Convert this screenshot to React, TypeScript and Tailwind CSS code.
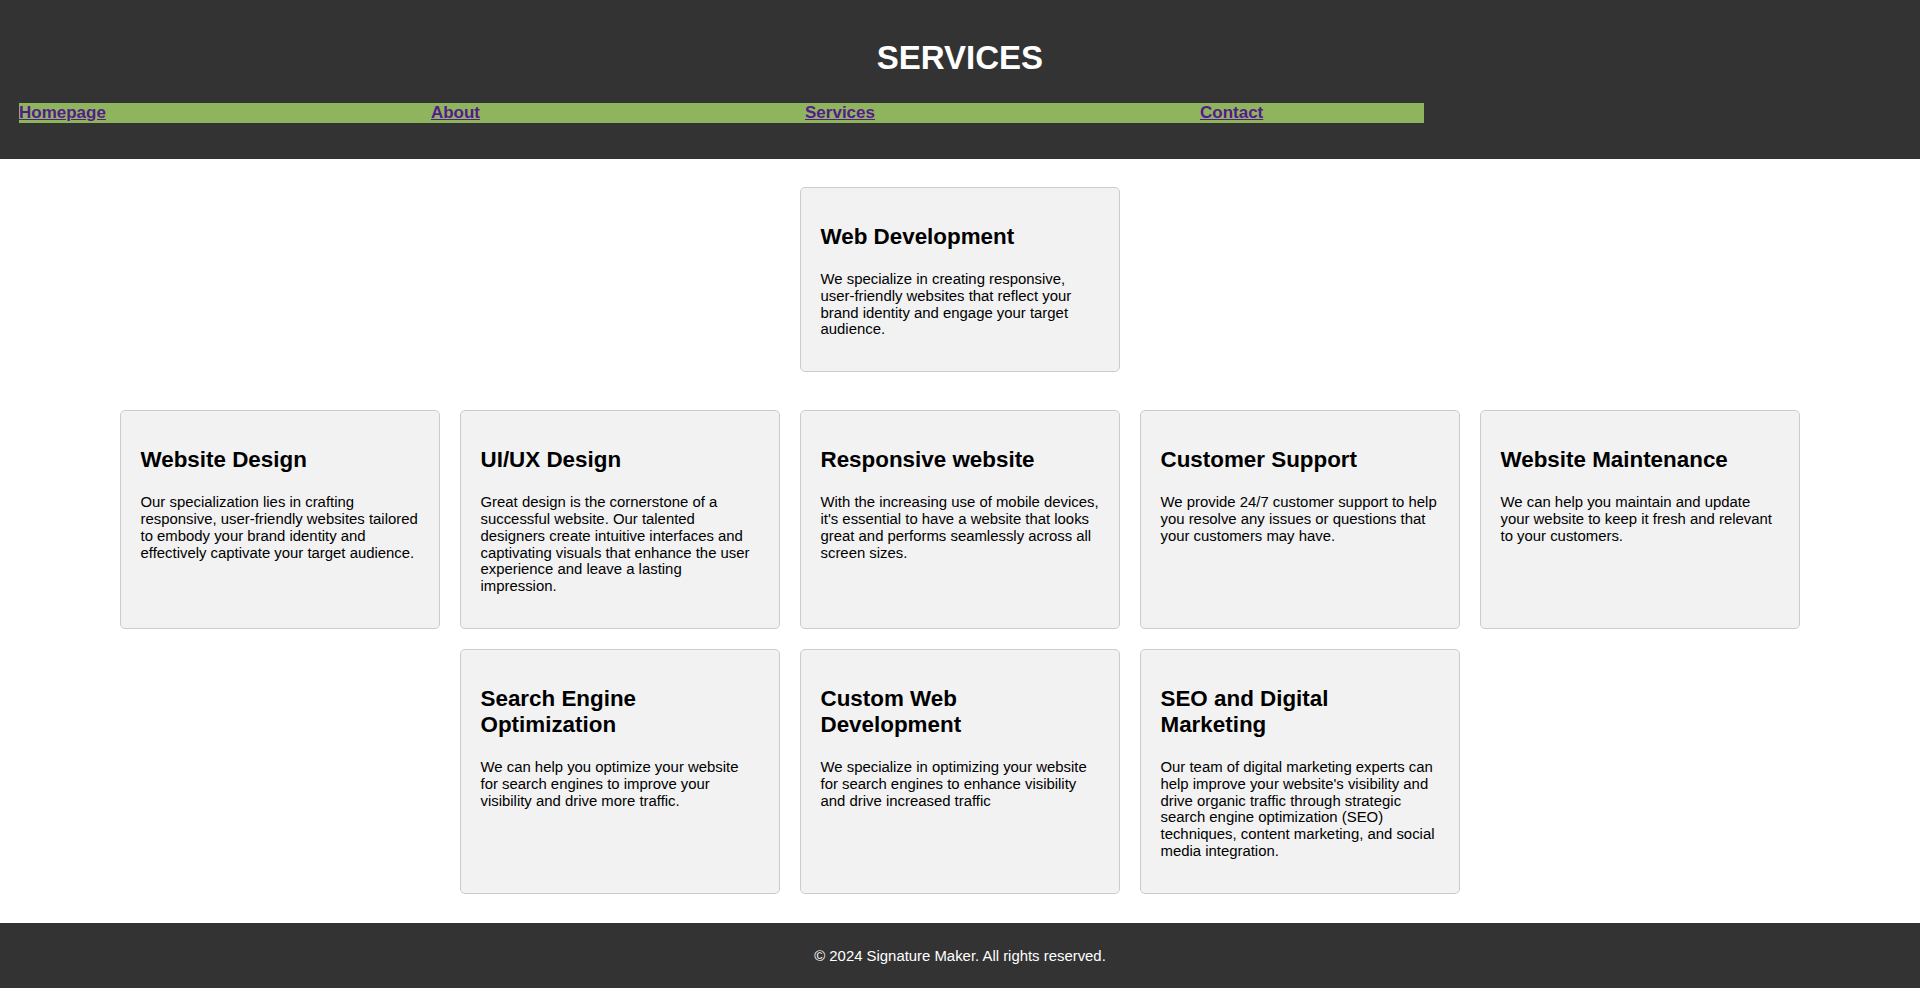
import React from "react";

const featured = {
  title: "Web Development",
  text: "We specialize in creating responsive, user-friendly websites that reflect your brand identity and engage your target audience.",
};

const services = [
  {
    title: "Website Design",
    text: "Our specialization lies in crafting responsive, user-friendly websites tailored to embody your brand identity and effectively captivate your target audience.",
  },
  {
    title: "UI/UX Design",
    text: "Great design is the cornerstone of a successful website. Our talented designers create intuitive interfaces and captivating visuals that enhance the user experience and leave a lasting impression.",
  },
  {
    title: "Responsive website",
    text: "With the increasing use of mobile devices, it's essential to have a website that looks great and performs seamlessly across all screen sizes.",
  },
  {
    title: "Customer Support",
    text: "We provide 24/7 customer support to help you resolve any issues or questions that your customers may have.",
  },
  {
    title: "Website Maintenance",
    text: "We can help you maintain and update your website to keep it fresh and relevant to your customers.",
  },
  {
    title: "Search Engine Optimization",
    text: "We can help you optimize your website for search engines to improve your visibility and drive more traffic.",
  },
  {
    title: "Custom Web Development",
    text: "We specialize in optimizing your website for search engines to enhance visibility and drive increased traffic",
  },
  {
    title: "SEO and Digital Marketing",
    text: "Our team of digital marketing experts can help improve your website's visibility and drive organic traffic through strategic search engine optimization (SEO) techniques, content marketing, and social media integration.",
  },
];

function Card({ title, text }: { title: string; text: string }) {
  return (
    <div className="w-[320px] border border-[#cccccc] rounded-[5px] bg-[#f2f2f2] px-[19.5px] py-[20px]">
      <h2 className="mt-[16px] text-[22.4px] leading-[26px] font-bold text-black">{title}</h2>
      <p className="mt-[21px] mb-[13px] text-[14.9px] leading-[16.8px] text-black">{text}</p>
    </div>
  );
}

export default function App() {
  return (
    <div className="w-[1920px] min-h-[988px] bg-white font-['Liberation_Sans',Arial,sans-serif]">
      <header className="bg-[#333333] pt-[39px] pb-[36px]">
        <h1 className="text-center text-white font-bold text-[33px] leading-[38px]">SERVICES</h1>
        <nav className="mt-[26px] ml-[19px] w-[1405px] bg-[#8fb45e]">
          <ul className="flex gap-[325px] h-[20px] text-[17px] leading-[20px] font-bold">
            {["Homepage", "About", "Services", "Contact"].map((l) => (
              <li key={l} className="text-[17px] leading-[20px]">
                <a href="#" className="text-[#551a8b] underline">
                  {l}
                </a>
              </li>
            ))}
          </ul>
        </nav>
      </header>

      <main className="pt-[28px] pb-[29px]">
        <div className="flex justify-center">
          <Card title={featured.title} text={featured.text} />
        </div>
        <div className="mt-[38px] mx-auto w-[1680px] flex flex-wrap justify-center gap-[20px]">
          {services.map((s) => (
            <Card key={s.title} title={s.title} text={s.text} />
          ))}
        </div>
      </main>

      <footer className="bg-[#333333] pt-[25px] pb-[23px] text-center">
        <p className="text-white text-[14.9px] leading-[17px]">© 2024 Signature Maker. All rights reserved.</p>
      </footer>
    </div>
  );
}
